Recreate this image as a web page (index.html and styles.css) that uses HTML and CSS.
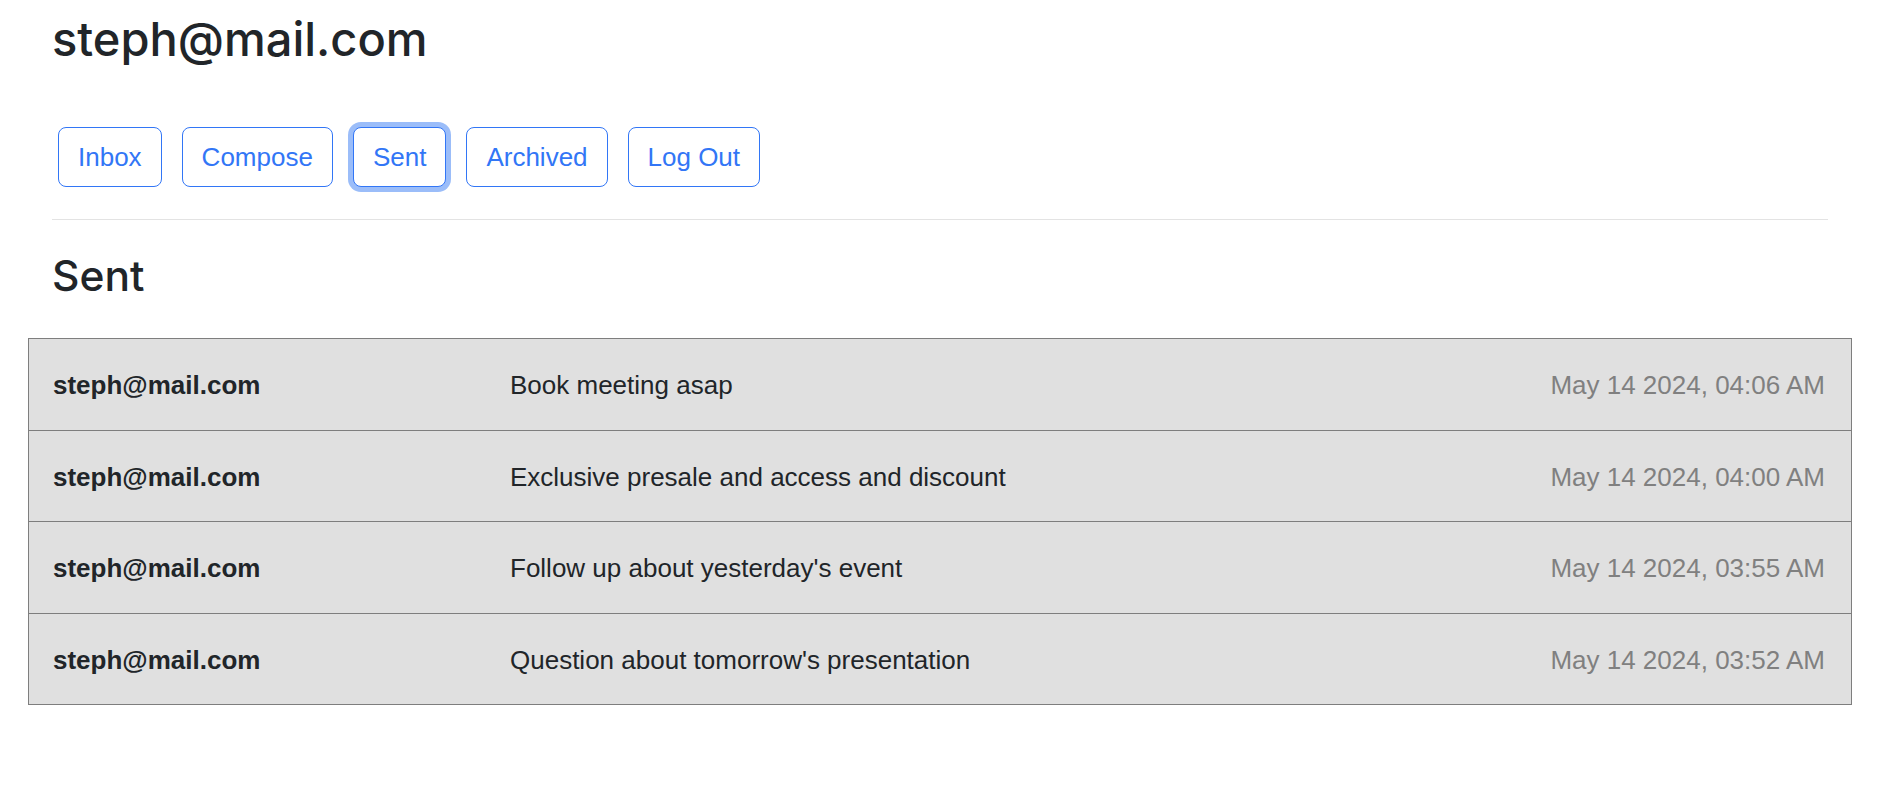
FILE: index.html
```html
<!DOCTYPE html>
<html lang="en">
<head>
<meta charset="utf-8">
<title>Sent</title>
<link rel="stylesheet" href="styles.css">
</head>
<body>
<div class="page">
  <h2 class="title">steph@mail.com</h2>
  <nav class="nav">
    <button class="btn">Inbox</button>
    <button class="btn">Compose</button>
    <button class="btn btn-focus">Sent</button>
    <button class="btn">Archived</button>
    <button class="btn">Log Out</button>
  </nav>
  <hr class="rule">
  <h3 class="heading">Sent</h3>
  <div class="list">
    <div class="row">
      <div class="sender">steph@mail.com</div>
      <div class="subject">Book meeting asap</div>
      <div class="date">May 14 2024, 04:06 AM</div>
    </div>
    <div class="row">
      <div class="sender">steph@mail.com</div>
      <div class="subject">Exclusive presale and access and discount</div>
      <div class="date">May 14 2024, 04:00 AM</div>
    </div>
    <div class="row">
      <div class="sender">steph@mail.com</div>
      <div class="subject">Follow up about yesterday's event</div>
      <div class="date">May 14 2024, 03:55 AM</div>
    </div>
    <div class="row">
      <div class="sender">steph@mail.com</div>
      <div class="subject">Question about tomorrow's presentation</div>
      <div class="date">May 14 2024, 03:52 AM</div>
    </div>
  </div>
</div>
</body>
</html>
```
FILE: styles.css
```css
* { box-sizing: border-box; }

html, body {
  margin: 0;
  padding: 0;
  background: #ffffff;
}

body {
  font-family: "Liberation Sans", Arial, Helvetica, sans-serif;
  font-size: 26px;
  line-height: 36px;
  color: #212529;
}

.page {
  padding: 0 66px 0 52px;
}

.title {
  margin: 11px 0 0 0;
  font-family: Inter, "Liberation Sans", Arial, sans-serif;
  font-size: 47px;
  font-weight: 500;
  line-height: 1.2;
  color: #212529;
}

.nav {
  display: flex;
  gap: 20px;
  margin: 60px 0 0 6px;
}

.btn {
  font-family: inherit;
  font-size: 26px;
  line-height: 36px;
  padding: 11px 19px;
  border: 1px solid #3276f6;
  border-radius: 8px;
  background: #ffffff;
  color: #3276f6;
  cursor: pointer;
}

.btn-focus {
  box-shadow: 0 0 0 5px #9bbdf9;
}

.rule {
  margin: 32px 0 0 0;
  border: 0;
  border-top: 1px solid #e3e3e3;
  height: 0;
}

.heading {
  margin: 30px 0 0 0;
  font-family: Inter, "Liberation Sans", Arial, sans-serif;
  font-size: 42.5px;
  font-weight: 500;
  line-height: 1.2;
  color: #212529;
}

.list {
  margin: 37px -24px 0 -24px;
  border: 1px solid #7e7e7e;
  border-bottom: 0;
}

.row {
  display: grid;
  grid-template-columns: 457px 1fr auto;
  align-items: center;
  height: 91.5px;
  padding: 1px 26px 0 24px;
  background: #e0e0e0;
  border-bottom: 1px solid #7e7e7e;
}

.sender {
  font-weight: 700;
  color: #212529;
}

.subject {
  color: #212529;
}

.date {
  color: #808080;
  text-align: right;
}
```
